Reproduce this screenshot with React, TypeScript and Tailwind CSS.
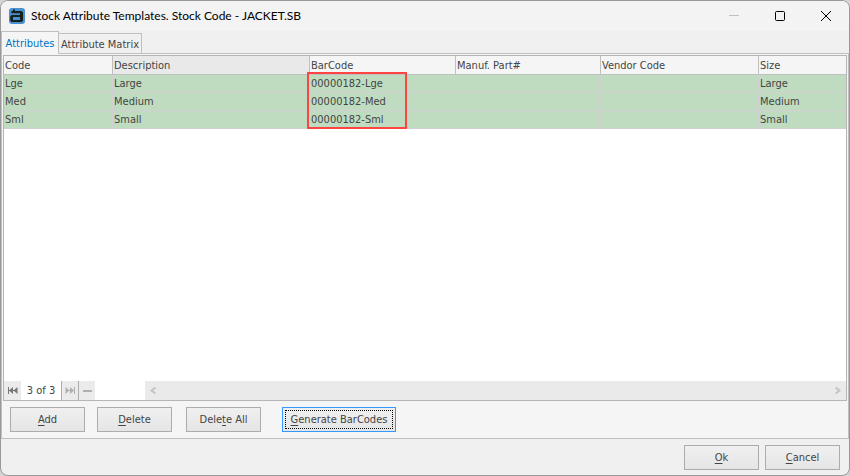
import React from 'react';

interface AttributeRow {
  code: string;
  description: string;
  barCode: string;
  manufPart: string;
  vendorCode: string;
  size: string;
}

const rows: AttributeRow[] = [
  { code: 'Lge', description: 'Large', barCode: '00000182-Lge', manufPart: '', vendorCode: '', size: 'Large' },
  { code: 'Med', description: 'Medium', barCode: '00000182-Med', manufPart: '', vendorCode: '', size: 'Medium' },
  { code: 'Sml', description: 'Small', barCode: '00000182-Sml', manufPart: '', vendorCode: '', size: 'Small' },
];

const columns: { key: keyof AttributeRow; label: string; width: string }[] = [
  { key: 'code', label: 'Code', width: 'w-[109px]' },
  { key: 'description', label: 'Description', width: 'w-[197px]' },
  { key: 'barCode', label: 'BarCode', width: 'w-[146px]' },
  { key: 'manufPart', label: 'Manuf. Part#', width: 'w-[145px]' },
  { key: 'vendorCode', label: 'Vendor Code', width: 'w-[158px]' },
  { key: 'size', label: 'Size', width: 'w-auto' },
];

const AppLogo = () => (
  <svg width="16" height="16" viewBox="0 0 16 16" aria-hidden="true">
    <rect width="16" height="16" rx="3" fill="#4a8fd0" />
    <path
      d="M4 1.6H6V3H12.4L14 4.6V12.4L12.6 14H2.6L1.2 12.6V8.4L2.6 7H11V5.2H2.4V3H4ZM4 9V12H11V9Z"
      fill="#15211d"
      fillRule="evenodd"
    />
  </svg>
);

const TitleBar = () => (
  <header className="flex h-[30px] items-center bg-[#f3f3f3] pl-2">
    <AppLogo />
    <h1 className="ml-[6px] flex-1 font-[Lato,sans-serif] text-[12px] leading-4 text-black">
      Stock Attribute Templates. Stock Code - JACKET.SB
    </h1>
    <button aria-label="Minimize" className="flex h-full w-[46px] items-center justify-center text-[#c0c0c0]">
      <svg width="10" height="10" viewBox="0 0 10 10" stroke="currentColor">
        <path d="M0 4.5H10" />
      </svg>
    </button>
    <button aria-label="Maximize" className="flex h-full w-[46px] items-center justify-center text-black">
      <svg width="10" height="10" viewBox="0 0 10 10" fill="none" stroke="currentColor">
        <rect x="0.5" y="0.5" width="9" height="9" rx="1" />
      </svg>
    </button>
    <button aria-label="Close" className="flex h-full w-[46px] items-center justify-center text-black">
      <svg width="10" height="10" viewBox="0 0 10 10" stroke="currentColor">
        <path d="M0 0L10 10M10 0L0 10" />
      </svg>
    </button>
  </header>
);

interface DialogButtonProps {
  // The character between before and after is the underlined access key
  before?: string;
  accessKey: string;
  after: string;
  className?: string;
  active?: boolean;
}

const DialogButton: React.FC<DialogButtonProps> = ({
  before = '',
  accessKey,
  after,
  className = '',
  active = false,
}) => (
  <button
    className={`h-[25px] border bg-linear-to-b from-[#f0f0f0] to-[#e5e5e5] text-center ${
      active
        ? 'w-[114px] border-[#3399ff] outline-1 -outline-offset-4 outline-dotted outline-black'
        : 'w-[75px] border-[#acacac]'
    } ${className}`}
  >
    {before}
    <u className="underline-offset-2">{accessKey}</u>
    {after}
  </button>
);

const AttributeTable = () => (
  <div className="relative flex-1">
    <table className="w-full table-fixed border-separate border-spacing-0 text-left">
      <thead>
        <tr className="h-[19px]">
          {columns.map((col) => (
            <th
              key={col.key}
              className={`${col.width} border-r border-b border-[#c0c0c0] pt-[2px] pr-0 pb-0 pl-[1px] font-normal last:border-r-0 ${
                col.key === 'description' ? 'bg-[#e9e9e9]' : 'bg-[#f5f5f5]'
              }`}
            >
              {col.label}
            </th>
          ))}
        </tr>
      </thead>
      <tbody>
        {rows.map((row) => (
          <tr key={row.code} className="h-[18px] bg-[#c0dcc0]">
            {columns.map((col) => (
              <td
                key={col.key}
                className="border-r border-b border-[#d6ced6] pt-[1px] pr-0 pb-0 pl-[1px] last:border-r-0"
              >
                {row[col.key]}
              </td>
            ))}
          </tr>
        ))}
      </tbody>
    </table>
    {/* Highlight over the generated codes */}
    <div className="pointer-events-none absolute top-4 left-[303px] h-[57px] w-[100px] border-2 border-[#ff4444]" />
  </div>
);

const Navigator = () => (
  <div className="flex h-[19px] bg-white">
    <button aria-label="First record" className="flex w-[17px] items-center justify-center bg-[#ebebeb] text-[#777777]">
      <svg width="10" height="7" viewBox="0 0 10 7" fill="currentColor">
        <path d="M0 0H1V7H0ZM5 0V7L1 3.5ZM9.5 0V7L5.5 3.5Z" />
        <path d="M1 3H9V4H1Z" />
      </svg>
    </button>
    <span className="w-10 text-center leading-[19px]">3 of 3</span>
    <button
      aria-label="Last record"
      className="flex w-[17px] items-center justify-center border-l border-[#acacac] bg-[#ebebeb] text-[#b0b0b0]"
    >
      <svg width="10" height="7" viewBox="0 0 10 7" fill="currentColor">
        <path d="M9 0H10V7H9ZM5 0V7L9 3.5ZM0.5 0V7L4.5 3.5Z" />
        <path d="M1 3H9V4H1Z" />
      </svg>
    </button>
    <button
      aria-label="Delete record"
      className="flex w-[17px] items-center justify-center border-l border-[#acacac] bg-[#ebebeb] text-[#b0b0b0]"
    >
      <svg width="9" height="2" viewBox="0 0 9 2" fill="currentColor">
        <rect width="9" height="2" />
      </svg>
    </button>
    <div className="ml-[50px] flex flex-1 items-center justify-between bg-[#eaeaea] px-[5px] text-[#c4c4c4]">
      <button aria-label="Scroll left">
        <svg width="6" height="7" viewBox="0 0 6 7" fill="none" stroke="currentColor" strokeWidth="2">
          <path d="M5.5 0.5L1.5 3.5L5.5 6.5" />
        </svg>
      </button>
      <button aria-label="Scroll right">
        <svg width="6" height="7" viewBox="0 0 6 7" fill="none" stroke="currentColor" strokeWidth="2">
          <path d="M0.5 0.5L4.5 3.5L0.5 6.5" />
        </svg>
      </button>
    </div>
  </div>
);

export default function App() {
  return (
    <div className="min-h-screen bg-[#d4d4d4]">
      <main className="flex min-h-screen flex-col overflow-hidden rounded-lg border border-[#999999] bg-[#f0f0f0] font-['DejaVu_Sans_Condensed','DejaVu_Sans',sans-serif] text-[11px] leading-4 text-[#444444]">
        <TitleBar />
        <div role="tablist" className="flex items-end">
          <button
            role="tab"
            aria-selected="true"
            className="relative z-10 -mb-px h-[23px] w-[58px] border border-b-0 border-[#c0c0c0] bg-[#f5f5f5] pt-[2px] text-center text-[#0072c6]"
          >
            Attributes
          </button>
          <button
            role="tab"
            aria-selected="false"
            className="h-5 w-[83px] border border-b-0 border-l-0 border-[#c0c0c0] bg-[#f0f0f0] pt-[2px] text-center"
          >
            Attribute Matrix
          </button>
        </div>
        <section className="flex flex-1 flex-col border border-[#c0c0c0] bg-[#f5f5f5] px-[1px] pt-[1px]">
          <div className="flex flex-1 flex-col border border-[#b5b5b5] bg-white">
            <AttributeTable />
            <Navigator />
          </div>
          <div className="flex pt-[6px] pb-[6px] pl-[7px]">
            <DialogButton accessKey="A" after="dd" />
            <DialogButton accessKey="D" after="elete" className="ml-3" />
            <DialogButton before="Dele" accessKey="t" after="e All" className="ml-[14px]" />
            <DialogButton accessKey="G" after="enerate BarCodes" className="ml-[21px]" active />
          </div>
        </section>
        <footer className="flex justify-end gap-[6px] pt-[6px] pr-[9px] pb-[5px]">
          <DialogButton accessKey="O" after="k" />
          <DialogButton accessKey="C" after="ancel" />
        </footer>
      </main>
    </div>
  );
}
